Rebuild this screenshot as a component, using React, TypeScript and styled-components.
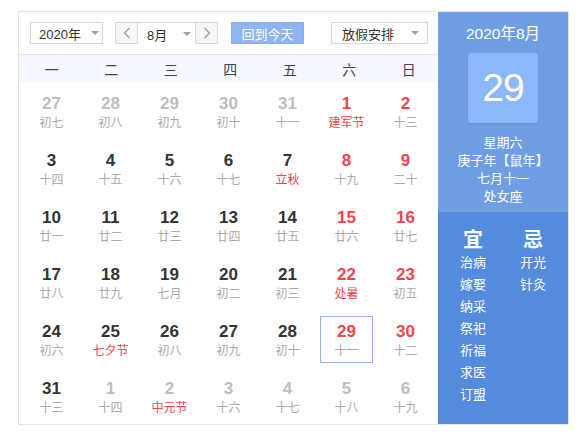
import React from 'react';
import styled, { createGlobalStyle } from 'styled-components';

const Global = createGlobalStyle`
  html, body { margin: 0; padding: 0; background: #fff; }
  body { font-family: "Liberation Sans", "Noto Sans CJK SC", sans-serif; color: #333; }
`;

const Page = styled.div`
  padding: 11px 0 0 18px;
`;

const Calendar = styled.div`
  display: flex;
  width: 551px;
  height: 414px;
  box-sizing: border-box;
  border: 1px solid #e3e3e3;
`;

const Main = styled.div`
  width: 419px;
  display: flex;
  flex-direction: column;
  overflow: hidden;
`;

const Toolbar = styled.div`
  height: 42px;
  flex: none;
  border-bottom: 1px solid #e3e3e3;
  display: flex;
  align-items: center;
  padding-left: 11px;
`;

const Select = styled.div<{ $w: number; $pl: number; $pr: number; $ml?: number; $bare?: boolean }>`
  width: ${p => p.$w}px;
  margin-left: ${p => p.$ml ?? 0}px;
  height: 22px;
  box-sizing: border-box;
  border: ${p => (p.$bare ? 'none' : '1px solid #d7d7d7')};
  background: #fff;
  display: flex;
  align-items: center;
  justify-content: space-between;
  padding: 0 ${p => p.$pr}px 0 ${p => p.$pl}px;
  font-size: 13px;
  color: #333;
`;

const Arrow = styled.span`
  width: 0;
  height: 0;
  border-left: 4px solid transparent;
  border-right: 4px solid transparent;
  border-top: 4px solid #a0a0a0;
`;

const MonthGroup = styled.div<{ $ml: number }>`
  margin-left: ${p => p.$ml}px;
  display: flex;
  height: 22px;
  box-sizing: border-box;
  border: 1px solid #d7d7d7;
`;

const StepButton = styled.div<{ $side: 'left' | 'right' }>`
  width: 21px;
  height: 20px;
  background: #f6f6f6;
  display: flex;
  align-items: center;
  justify-content: center;
  ${p => (p.$side === 'left' ? 'border-right: 1px solid #d7d7d7;' : 'border-left: 1px solid #d7d7d7;')}
`;

const TodayButton = styled.div<{ $ml: number }>`
  margin-left: ${p => p.$ml}px;
  width: 73px;
  height: 22px;
  box-sizing: border-box;
  background: #8eb5f2;
  border: 1px solid #86aef0;
  color: #fff;
  font-size: 13px;
  display: flex;
  align-items: center;
  justify-content: center;
`;

const WeekHeader = styled.div`
  height: 27px;
  flex: none;
  background: #f4f8fe;
  display: grid;
  grid-template-columns: repeat(7, 59.5px);
  padding-left: 3px;
  align-items: center;
`;

const WeekName = styled.div`
  text-align: center;
  font-size: 14px;
  color: #444;
`;

const Grid = styled.div`
  display: grid;
  grid-template-columns: repeat(7, 59px);
  grid-auto-rows: 57px;
  padding-left: 3px;
`;

const Cell = styled.div`
  padding: 6px 3px 4px;
`;

const DayBox = styled.div<{ $today?: boolean }>`
  height: 47px;
  box-sizing: border-box;
  border: 1px solid ${p => (p.$today ? '#8cb4f3' : 'transparent')};
  display: flex;
  flex-direction: column;
  align-items: center;
  padding-top: 5px;
`;

const DayNum = styled.div<{ $tone: 'normal' | 'red' | 'gray' }>`
  font-size: 17px;
  font-weight: bold;
  line-height: 20px;
  color: ${p => (p.$tone === 'red' ? '#f2444b' : p.$tone === 'gray' ? '#bdbdbd' : '#333')};
`;

const Lunar = styled.div<{ $red?: boolean }>`
  font-size: 12px;
  line-height: 16px;
  font-family: "Noto Sans CJK SC", sans-serif;
  color: ${p => (p.$red ? '#f2444b' : '#aaa')};
`;

const Side = styled.div`
  width: 130px;
  display: flex;
  flex-direction: column;
  color: #fff;
  font-family: "Noto Sans CJK SC", sans-serif;
`;

const SideTop = styled.div`
  height: 200px;
  flex: none;
  background: #6f9ee3;
  display: flex;
  flex-direction: column;
  align-items: center;
  padding-top: 12px;
  box-sizing: border-box;
`;

const MonthTitle = styled.div`
  font-size: 15.5px;
  line-height: 20px;
  font-family: "Liberation Sans", "Noto Sans CJK SC", sans-serif;
`;

const BigDate = styled.div`
  margin-top: 9px;
  width: 70px;
  height: 70px;
  border-radius: 3px;
  background: #8cb7f9;
  box-shadow: 0 1px 2px rgba(40, 80, 150, 0.2);
  display: flex;
  align-items: center;
  justify-content: center;
  font-family: "Liberation Sans", sans-serif;
  font-size: 39px;
  letter-spacing: -1px;
`;

const InfoLines = styled.div`
  margin-top: 10px;
  font-size: 13px;
  line-height: 18px;
  text-align: center;
`;

const SideBottom = styled.div`
  flex: 1;
  background: #558bdc;
  display: grid;
  grid-template-columns: 60px 60px;
  padding: 15px 0 0 5px;
  align-content: start;
`;

const AlmanacCol = styled.div`
  display: flex;
  flex-direction: column;
  align-items: center;
`;

const AlmanacTitle = styled.div`
  font-size: 20px;
  font-weight: bold;
  line-height: 24px;
`;

const AlmanacItem = styled.div`
  font-size: 13px;
  line-height: 22px;
`;

const Chevron = ({ dir }: { dir: 'left' | 'right' }) => (
  <svg width="8" height="12" viewBox="0 0 8 12">
    <polyline
      points={dir === 'left' ? '6.5,1 1.5,6 6.5,11' : '1.5,1 6.5,6 1.5,11'}
      fill="none"
      stroke="#999"
      strokeWidth="1.1"
    />
  </svg>
);

type Day = { n: number; l: string; tone: 'normal' | 'red' | 'gray'; lr?: boolean; today?: boolean };

const days: Day[] = [
  { n: 27, l: '初七', tone: 'gray' },
  { n: 28, l: '初八', tone: 'gray' },
  { n: 29, l: '初九', tone: 'gray' },
  { n: 30, l: '初十', tone: 'gray' },
  { n: 31, l: '十一', tone: 'gray' },
  { n: 1, l: '建军节', tone: 'red', lr: true },
  { n: 2, l: '十三', tone: 'red' },
  { n: 3, l: '十四', tone: 'normal' },
  { n: 4, l: '十五', tone: 'normal' },
  { n: 5, l: '十六', tone: 'normal' },
  { n: 6, l: '十七', tone: 'normal' },
  { n: 7, l: '立秋', tone: 'normal', lr: true },
  { n: 8, l: '十九', tone: 'red' },
  { n: 9, l: '二十', tone: 'red' },
  { n: 10, l: '廿一', tone: 'normal' },
  { n: 11, l: '廿二', tone: 'normal' },
  { n: 12, l: '廿三', tone: 'normal' },
  { n: 13, l: '廿四', tone: 'normal' },
  { n: 14, l: '廿五', tone: 'normal' },
  { n: 15, l: '廿六', tone: 'red' },
  { n: 16, l: '廿七', tone: 'red' },
  { n: 17, l: '廿八', tone: 'normal' },
  { n: 18, l: '廿九', tone: 'normal' },
  { n: 19, l: '七月', tone: 'normal' },
  { n: 20, l: '初二', tone: 'normal' },
  { n: 21, l: '初三', tone: 'normal' },
  { n: 22, l: '处暑', tone: 'red', lr: true },
  { n: 23, l: '初五', tone: 'red' },
  { n: 24, l: '初六', tone: 'normal' },
  { n: 25, l: '七夕节', tone: 'normal', lr: true },
  { n: 26, l: '初八', tone: 'normal' },
  { n: 27, l: '初九', tone: 'normal' },
  { n: 28, l: '初十', tone: 'normal' },
  { n: 29, l: '十一', tone: 'red', today: true },
  { n: 30, l: '十二', tone: 'red' },
  { n: 31, l: '十三', tone: 'normal' },
  { n: 1, l: '十四', tone: 'gray' },
  { n: 2, l: '中元节', tone: 'gray', lr: true },
  { n: 3, l: '十六', tone: 'gray' },
  { n: 4, l: '十七', tone: 'gray' },
  { n: 5, l: '十八', tone: 'gray' },
  { n: 6, l: '十九', tone: 'gray' },
];

const weekNames = ['一', '二', '三', '四', '五', '六', '日'];
const yi = ['治病', '嫁娶', '纳采', '祭祀', '祈福', '求医', '订盟'];
const ji = ['开光', '针灸'];

export default function App() {
  return (
    <>
      <Global />
      <Page>
        <Calendar>
          <Main>
            <Toolbar>
              <Select $w={73} $pl={8} $pr={3}>
                <span>2020年</span>
                <Arrow />
              </Select>
              <MonthGroup $ml={12}>
                <StepButton $side="left">
                  <Chevron dir="left" />
                </StepButton>
                <Select $w={57} $pl={9} $pr={4} $bare>
                  <span>8月</span>
                  <Arrow />
                </Select>
                <StepButton $side="right">
                  <Chevron dir="right" />
                </StepButton>
              </MonthGroup>
              <TodayButton $ml={13}>回到今天</TodayButton>
              <Select $w={97} $pl={10} $pr={8} $ml={27}>
                <span>放假安排</span>
                <Arrow />
              </Select>
            </Toolbar>
            <WeekHeader>
              {weekNames.map(w => (
                <WeekName key={w}>{w}</WeekName>
              ))}
            </WeekHeader>
            <Grid>
              {days.map((d, i) => (
                <Cell key={i}>
                  <DayBox $today={d.today}>
                    <DayNum $tone={d.tone}>{d.n}</DayNum>
                    <Lunar $red={d.lr}>{d.l}</Lunar>
                  </DayBox>
                </Cell>
              ))}
            </Grid>
          </Main>
          <Side>
            <SideTop>
              <MonthTitle>2020年8月</MonthTitle>
              <BigDate>29</BigDate>
              <InfoLines>
                <div>星期六</div>
                <div>庚子年【鼠年】</div>
                <div>七月十一</div>
                <div>处女座</div>
              </InfoLines>
            </SideTop>
            <SideBottom>
              <AlmanacCol>
                <AlmanacTitle>宜</AlmanacTitle>
                {yi.map(t => (
                  <AlmanacItem key={t}>{t}</AlmanacItem>
                ))}
              </AlmanacCol>
              <AlmanacCol>
                <AlmanacTitle>忌</AlmanacTitle>
                {ji.map(t => (
                  <AlmanacItem key={t}>{t}</AlmanacItem>
                ))}
              </AlmanacCol>
            </SideBottom>
          </Side>
        </Calendar>
      </Page>
    </>
  );
}
